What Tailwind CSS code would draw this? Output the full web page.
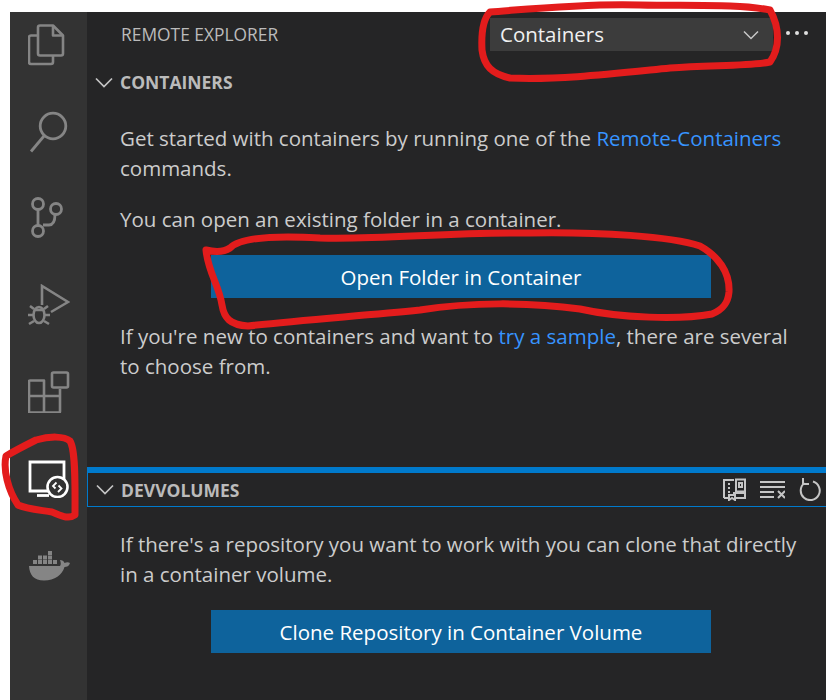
<!DOCTYPE html>
<html lang="en">
<head>
  <meta charset="UTF-8">
  <title>Remote Explorer</title>
  <script src="https://cdn.jsdelivr.net/npm/@tailwindcss/browser@4"></script>
</head>
<body class="bg-white">
  <div class="relative w-[826px] h-[700px] overflow-hidden pt-[12px] pl-[10px] flex font-['Open_Sans',sans-serif]">

    <!-- activity bar -->
    <aside class="w-[77px] h-full bg-[#333333] flex flex-col items-center text-[#858585] shrink-0">
      <svg class="mt-[12px] ml-[-4px]" width="38" height="42" viewBox="0 0 38 42" fill="none" stroke="currentColor" stroke-width="2.6" stroke-linejoin="round">
        <path d="M10 3.500a2 2 0 0 1 2-2h13l10 10v18a2 2 0 0 1-2 2H12a2 2 0 0 1-2-2z"/>
        <path d="M25 1.500v10h10"/>
        <path d="M10 11.500H3a2 2 0 0 0-2 2V38a2 2 0 0 0 2 2h20a2 2 0 0 0 2-2v-6.500"/>
      </svg>
      <svg class="mt-[45px]" width="40" height="42" viewBox="0 0 40 42" fill="none" stroke="currentColor" stroke-width="2.800">
        <circle cx="24" cy="15" r="12.800"/>
        <path d="M15 25 2 40.500"/>
      </svg>
      <svg class="mt-[44px] ml-[-4px]" width="32" height="42" viewBox="0 0 32 42" fill="none" stroke="currentColor" stroke-width="2.800">
        <circle cx="7" cy="7" r="5.500"/>
        <circle cx="7" cy="34" r="5.500"/>
        <circle cx="25" cy="12" r="5.500"/>
        <path d="M7 12.500v16M12 28h6c4 0 6-4 6-10.500"/>
      </svg>
      <svg class="mt-[45px]" width="42" height="42" viewBox="0 0 42 42" fill="none" stroke="currentColor" stroke-width="2.600">
        <path d="M14 21V2l26 16-17 10"/>
        <ellipse cx="11" cy="31" rx="5.500" ry="8"/>
        <path d="M6 26h10M5 31H0M17 31h5M6 37l-5 3M16 37l5 3M6 25l-4-3M16 25l4-3"/>
      </svg>
      <svg class="mt-[45px]" width="42" height="42" viewBox="0 0 42 42" fill="none" stroke="currentColor" stroke-width="2.600" stroke-linejoin="round">
        <rect x="24" y="1.500" width="16" height="15" rx="1.500"/>
        <path d="M3 9.500h13v32H2a1 1 0 0 1-1-1v-30a1 1 0 0 1 1-1zM1 25h31v15.500a1 1 0 0 1-1 1H16M16 25h16V18"/>
      </svg>
      <svg class="mt-[47px]" width="42" height="38" viewBox="0 0 42 38" fill="none">
        <path d="M2 2h34v29H2z" stroke="#ffffff" stroke-width="2.800"/>
        <path d="M9 35.500h12" stroke="#ffffff" stroke-width="2.800"/>
        <circle cx="29.500" cy="27" r="10" fill="#333333" stroke="#ffffff" stroke-width="2.600"/>
        <path d="M28.500 22.500l-3.500 3.500 2.500 2.500M30.500 25.500l3 3-3.500 3.500" stroke="#ffffff" stroke-width="1.800"/>
      </svg>
      <svg class="mt-[53px]" width="42" height="30" viewBox="0 0 42 30" fill="currentColor">
        <path d="M1 15h31c1-1 1-3 0-6 2 0 4 1 4.500 3 2-1 4-1 5.500 0-1 3-3 4-5.500 4C34 24 27 29.500 16 29.500 6 29.500 1.500 24 1 15z"/>
        <path d="M5 9h4v4H5zM10 9h4v4h-4zM15 9h4v4h-4zM20 9h4v4h-4zM10 4.500h4v4h-4zM15 4.500h4v4h-4zM20 4.500h4v4h-4zM20 0h4v4h-4zM25 9h4v4h-4z"/>
      </svg>
    </aside>

    <!-- sidebar -->
    <main class="flex-1 h-full bg-[#252526] text-[#cccccc] text-[20.500px] leading-[30px]">
      <header class="h-[44px] flex items-start pl-[34px] pt-[6px]">
        <span class="w-[369px] h-[33px] leading-[32px] text-[17.400px] text-[#bbbbbb]">REMOTE EXPLORER</span>
        <div class="w-[283px] h-[33px] bg-[#3c3c3c] flex items-center justify-between pl-[10px] pr-[14px] text-[#f0f0f0] leading-[31px]">
          <span>Containers</span>
          <svg width="16" height="10" viewBox="0 0 16 10" fill="none" stroke="#c8c8c8" stroke-width="1.500"><path d="M1 1.500l7 7 7-7"/></svg>
        </div>
        <svg class="ml-[12px] mt-[12px]" width="24" height="6" viewBox="0 0 24 6" fill="#e0e0e0"><circle cx="3" cy="3" r="2"/><circle cx="12" cy="3" r="2"/><circle cx="21" cy="3" r="2"/></svg>
      </header>

      <section class="h-[411px]">
        <div class="h-[52px] flex items-center pl-[8px] gap-[7px] font-bold text-[17.500px] text-[#bbbbbb] leading-[54px]">
          <svg width="18" height="11" viewBox="0 0 18 11" fill="none" stroke="#c5c5c5" stroke-width="1.700"><path d="M1 1.500l8 8 8-8"/></svg>
          <span>CONTAINERS</span>
        </div>
        <div class="pl-[33px] pr-[28px] pt-[15px]">
          <p>Get started with containers by running one of the <a class="text-[#3794ff]">Remote-Containers</a> commands.</p>
          <p class="mt-[21px]">You can open an existing folder in a container.</p>
          <button class="block mt-[21px] ml-[91px] w-[500px] h-[43px] bg-[#0e639c] text-white text-center">Open Folder in Container</button>
          <p class="mt-[23px]">If you're new to containers and want to <a class="text-[#3794ff]">try a sample</a>, there are several to choose from.</p>
        </div>
      </section>

      <section class="border-t-[6px] border-[#007acc]">
        <div class="h-[34px] flex items-center pl-[8px] gap-[7px] font-bold text-[17.500px] text-[#bbbbbb] border-l border-b border-[#007acc] leading-[34px]">
          <svg width="18" height="11" viewBox="0 0 18 11" fill="none" stroke="#c5c5c5" stroke-width="1.700"><path d="M1 1.500l8 8 8-8"/></svg>
          <span class="w-[610px]">DEVVOLUMES</span>
          <div class="flex items-center gap-[14px] text-[#c5c5c5] ml-[-16px]">
            <svg width="24" height="23" viewBox="0 0 24 23" fill="none" stroke="currentColor" stroke-width="2"><path d="M2 20V2h10M14 1.500h9v12h-9zM2 20h5M13 20h10v-5H11M7 22v-5h6v5l-3-2zM7 5v2M7 9v2M7 13v2M17 5h3v4h-3z"/></svg>
            <svg width="25" height="19" viewBox="0 0 25 19" fill="none" stroke="currentColor" stroke-width="2"><path d="M0 2h25M0 7h25M0 12h14M0 17h14M18 11l7 7M25 11l-7 7"/></svg>
            <svg width="23" height="23" viewBox="0 0 23 23" fill="none" stroke="currentColor" stroke-width="2"><path d="M14 3.500a9.500 9.500 0 1 1-8.500 1.500M4 0v6h6"/></svg>
          </div>
        </div>
        <div class="pl-[33px] pr-[24px] pt-[22px]">
          <p>If there's a repository you want to work with you can clone that directly in a container volume.</p>
          <button class="block mt-[21px] ml-[91px] w-[500px] h-[43px] bg-[#0e639c] text-white text-center">Clone Repository in Container Volume</button>
        </div>
      </section>
    </main>

    <!-- red marker annotations drawn over the screenshot -->
    <svg class="absolute left-0 top-0 pointer-events-none" width="826" height="700" viewBox="0 0 826 700" fill="none" stroke="#e31c1c" stroke-width="7" stroke-linecap="round" stroke-linejoin="round">
      <path d="M490 12C484 18 481 30 482 50 484 66 492 74 510 78 560 80 610 74 670 68 710 65 750 66 770 62 780 48 780 28 770 10 740 4 690 6 640 5 590 3 530 9 490 12Z"/>
      <path d="M206 250C214 252 224 252 230 248 240 238 270 235 320 238 380 240 450 232 530 233 600 232 670 236 700 246 718 256 730 272 729 292 728 304 722 310 712 314 680 320 620 318 580 309 530 302 470 302 420 310 360 316 300 320 248 326 230 325 224 318 222 305 219 285 208 272 206 250Z"/>
      <path d="M6 456C16 450 24 446 36 440 50 436 64 436 70 441 76 450 75 490 75 515 68 520 60 515 52 512 40 510 26 509 18 505 8 490 3 470 6 456Z"/>
    </svg>
  </div>
</body>
</html>
